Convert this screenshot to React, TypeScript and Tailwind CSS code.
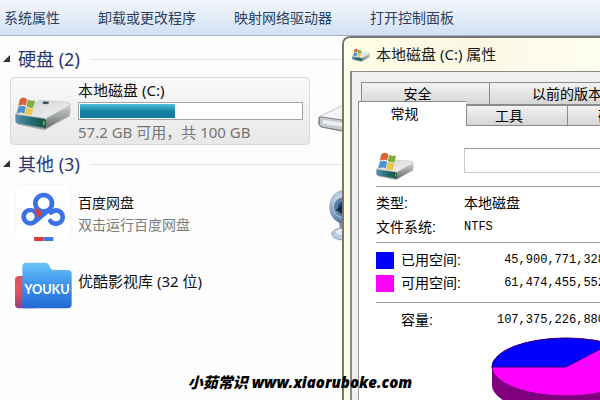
import { useState } from 'react'

const toolbarItems = ['系统属性', '卸载或更改程序', '映射网络驱动器', '打开控制面板']

// The small sizes carry a bigger Windows flag than the 56px tile icon
function DriveIcon({ className, small = false }: { className: string; small?: boolean }) {
  return (
    <svg viewBox={small ? '0 0 168 124' : '0 0 168 105'} className={className} aria-hidden="true">
      <defs>
        <linearGradient id="driveTop" x1="0" y1="0" x2="1" y2="1">
          <stop offset="0" stopColor="#d2d4d4" />
          <stop offset="1" stopColor="#f2f3f3" />
        </linearGradient>
        <linearGradient id="driveSide" x1="0" y1="0" x2="0" y2="1">
          <stop offset="0" stopColor="#d3d5d5" />
          <stop offset="1" stopColor="#666a6a" />
        </linearGradient>
        <linearGradient id="driveFront" x1="0" y1="0" x2="1" y2="0">
          <stop offset="0" stopColor="#5a8fb0" />
          <stop offset="0.5" stopColor="#226e74" />
          <stop offset="1" stopColor="#174f3b" />
        </linearGradient>
      </defs>
      <g transform={small ? 'translate(0 20)' : undefined}>
        <path d="M6 86 L88 104 L164 62 L164 54 L94 88 Z" fill="#a8abab" />
        <path d="M2 58 Q2 53 8 49 L66 19 Q74 14 84 15 L154 20 Q166 21 166 29 L98 67 Q92 71 84 69 Z" fill="url(#driveTop)" stroke="#aeb1b1" strokeWidth="1.5" />
        <path d="M94 69 L166 28 L166 50 Q165 55 158 59 L98 96 Q94 99 90 99 Z" fill="url(#driveSide)" />
        <path d="M2 57 L86 69 Q94 70 94 78 L94 99 L10 85 Q2 83 2 76 Z" fill="url(#driveFront)" stroke="#8e9696" strokeWidth="2" />
        <path d="M84 76 L89 77 L89 90 L84 89 Z" fill="#59c36b" />
        {!small && <ellipse cx="92" cy="22" rx="10" ry="4" fill="#4a4d4d" />}
      </g>
      <g transform={small ? 'translate(2 -6) scale(1.45)' : undefined}>
        <path d="M14 12 Q25 1 36 11 L33 31 Q22 24 10 32 Z" fill="#dc6337" />
        <path d="M38 12 Q48 19 60 14 L55 35 Q45 39 35 32 Z" fill="#7fae3f" />
        <path d="M10 34 Q21 27 32 34 L28 54 Q17 48 5 55 Z" fill="#4c93cc" />
        <path d="M34 35 Q44 42 55 38 L50 58 Q40 61 30 55 Z" fill="#f2c54c" />
      </g>
    </svg>
  )
}

function BackDriveIcon() {
  return (
    <svg viewBox="0 0 168 84" className="h-7 w-14" aria-hidden="true">
      <path d="M3 36 L70 4 L160 10 L160 44 L90 82 L10 66 Q2 64 2 54 Z" fill="#dfe1e3" stroke="#8d9195" strokeWidth="3" />
      <path d="M3 36 L70 4 L160 10 L90 46 Z" fill="#f4f5f6" />
      <path d="M4 38 Q4 34 12 36 L84 47 Q90 48 90 56 L90 80 L12 66 Q4 64 4 56 Z" fill="#c7cace" stroke="#7d8286" strokeWidth="3" />
      <path d="M14 44 L78 54 L78 66 L14 56 Z" fill="#eceef0" />
    </svg>
  )
}

function WebcamIcon() {
  return (
    <svg viewBox="0 0 90 162" className="h-[54px] w-[30px]" aria-hidden="true">
      <defs>
        <radialGradient id="camBody" cx="0.35" cy="0.3" r="0.8">
          <stop offset="0" stopColor="#dbe5f0" />
          <stop offset="0.6" stopColor="#7c9bbd" />
          <stop offset="1" stopColor="#3d5877" />
        </radialGradient>
      </defs>
      <path d="M28 92 L60 92 L56 130 L34 130 Z" fill="#7f95ad" />
      <ellipse cx="42" cy="138" rx="34" ry="18" fill="#b9cbe0" stroke="#6d839c" strokeWidth="2" />
      <ellipse cx="40" cy="132" rx="20" ry="9" fill="#e3ebf4" />
      <ellipse cx="44" cy="56" rx="43" ry="50" fill="url(#camBody)" />
      <circle cx="44" cy="58" r="31" fill="#5b7fa8" stroke="#b5c8dc" strokeWidth="3" />
      <circle cx="46" cy="60" r="20" fill="#23486f" />
      <path d="M20 66 L40 50 L40 74 Z" fill="#0f2741" />
    </svg>
  )
}

function BaiduIcon() {
  return (
    <svg viewBox="0 0 168 174" className="h-[58px] w-14" aria-hidden="true">
      <rect x="1" y="1" width="166" height="172" rx="14" fill="#fff" stroke="#f3f3f3" strokeWidth="2" />
      <g fill="none" stroke="#3b73e6" strokeWidth="14" strokeLinecap="round">
        <circle cx="86" cy="58" r="25" />
        <circle cx="46" cy="98" r="20" />
        <path d="M61 112 L104 76" />
        <path d="M108 86 C122 72 143 82 143 99 C143 118 119 126 106 111" />
      </g>
      <path d="M57 79 L68 73 L83 89 L70 101 Z" fill="#d83d40" />
      <rect x="57" y="159" width="29" height="12" rx="2" fill="#e0393f" />
      <rect x="86" y="159" width="29" height="12" rx="2" fill="#3b7de8" />
    </svg>
  )
}

function YoukuIcon() {
  return (
    <svg viewBox="0 0 171 141" className="h-[47px] w-[57px]" aria-hidden="true">
      <defs>
        <linearGradient id="youkuFolder" x1="0" y1="0" x2="0" y2="1">
          <stop offset="0" stopColor="#6cc4f7" />
          <stop offset="0.45" stopColor="#3f97ee" />
          <stop offset="1" stopColor="#2268d4" />
        </linearGradient>
        <linearGradient id="youkuBack" x1="0" y1="0" x2="0" y2="1">
          <stop offset="0" stopColor="#d9525c" />
          <stop offset="0.5" stopColor="#e2525f" />
          <stop offset="1" stopColor="#8f3f7f" />
        </linearGradient>
      </defs>
      <rect x="0" y="42" width="70" height="97" rx="12" fill="url(#youkuBack)" />
      <path d="M22 14 Q22 2 34 2 L90 2 Q98 2 102 9 L106 18 Q109 24 117 24 L158 24 Q170 24 170 36 L170 127 Q170 139 158 139 L22 139 Z" fill="url(#youkuFolder)" />
      <text x="28" y="97" fontSize="38" fontWeight="700" fontFamily="Lato, sans-serif" fill="#fff">YOUKU</text>
    </svg>
  )
}

function PieChart() {
  return (
    <svg viewBox="0 0 150 80" className="h-20 w-[150px] shrink-0" aria-hidden="true">
      <path d="M1 30 L1 48 A74 29 0 0 0 149 48 L149 30 Z" fill="#800080" />
      <ellipse cx="75" cy="30" rx="74" ry="29" fill="#f0f" stroke="#700070" strokeWidth="1" />
      <path d="M75 30 L1 30 A74 29 0 0 1 119 7 Z" fill="#00f" stroke="#200090" strokeWidth="1" />
    </svg>
  )
}

function SectionHeading({ title }: { title: string }) {
  return (
    <div className="flex h-6 items-center pl-[3px]">
      <svg viewBox="0 0 8 8" className="mr-[7px] size-2" aria-hidden="true">
        <path d="M7 0 L7 7 L0 7 Z" fill="#333" />
      </svg>
      <h2 className="text-lg leading-6 text-[#2b3570]">{title}</h2>
      <div className="ml-2.5 h-px flex-1 bg-[#e2e2e4]" />
    </div>
  )
}

const tabClass = 'shrink-0 border border-[#8c8c8c] bg-linear-to-b from-[#f3f3f3] to-[#d6d6d6] text-sm leading-5'

function PropertiesDialog() {
  const [label, setLabel] = useState('')

  return (
    <section
      role="dialog"
      aria-label="本地磁盘 (C:) 属性"
      className="absolute top-9 right-0 bottom-0 left-[342px] flex flex-col overflow-hidden rounded-tl-lg border-t-2 border-l-2 border-[#77776f] bg-[#fffee9]"
    >
      <header className="flex h-[33px] shrink-0 items-center gap-1.5 bg-linear-to-r from-[#fffee6] via-[#faf8e4] to-[#fffff0] pl-2 text-[#1a1a1a]">
        <DriveIcon small className="h-3.5 w-[18px]" />
        <h1 className="text-[15px]">本地磁盘 (C:) 属性</h1>
      </header>

      <div className="ml-1.5 flex flex-1 flex-col border-t border-l-2 border-[#8a8a86] bg-[#f0f0f0] pt-2.5 pl-1.5 font-['Liberation_Sans','Noto_Sans_CJK_SC',sans-serif] text-black">
        <div role="tablist">
          <div className="ml-[3px] flex h-[23px]">
            <button role="tab" className={`${tabClass} w-[129px] pr-4`}>安全</button>
            <button role="tab" className={`${tabClass} -ml-px w-[156px]`}>以前的版本</button>
          </div>
          <div className="flex h-[21px] items-end">
            <button role="tab" aria-selected="true" className="h-[25px] w-[108px] shrink-0 border-t border-l border-[#8c8c8c] bg-white pr-4 text-sm leading-5">
              常规
            </button>
            <button role="tab" className={`${tabClass} h-[21px] w-[102px] pr-4`}>工具</button>
            <button role="tab" className={`${tabClass} -ml-px h-[21px] w-[90px]`}>硬件</button>
          </div>
        </div>

        <div role="tabpanel" className="flex-1 border-l border-[#9a9a9a] bg-white pl-[17px] text-sm">
          <div className="flex h-[60px] items-start pt-[22px]">
            <DriveIcon small className="mt-1 h-7 w-[38px] shrink-0" />
            <input
              aria-label="卷标"
              value={label}
              onChange={(e) => setLabel(e.target.value)}
              className="ml-[50px] h-[25px] w-[200px] shrink-0 border border-[#c9c9c9] border-t-[#999] px-1"
            />
          </div>

          <dl className="grid h-14 grid-cols-[88px_1fr] content-center border-t border-[#999] leading-6">
            <dt>类型:</dt>
            <dd>本地磁盘</dd>
            <dt>文件系统:</dt>
            <dd className="font-['Liberation_Mono',monospace] text-xs leading-6">NTFS</dd>
          </dl>

          <table className="w-[229px] border-t border-[#999]">
            <tbody>
              <tr className="h-1.5" />
              <tr className="h-[23px]">
                <td className="w-[25px] p-0"><div className="h-[17px] w-[18px] bg-[#00f]" /></td>
                <th scope="row" className="p-0 text-left font-normal">已用空间:</th>
                <td className="p-0 text-right font-['Liberation_Mono',monospace] text-xs">45,900,771,328</td>
              </tr>
              <tr className="h-[23px]">
                <td className="p-0"><div className="h-[17px] w-[18px] bg-[#f0f]" /></td>
                <th scope="row" className="p-0 text-left font-normal">可用空间:</th>
                <td className="p-0 text-right font-['Liberation_Mono',monospace] text-xs">61,474,455,552</td>
              </tr>
              <tr className="h-2" />
              <tr className="h-[34px] border-t border-[#999]">
                <td className="p-0" />
                <th scope="row" className="p-0 text-left font-normal">容量:</th>
                <td className="p-0 text-right font-['Liberation_Mono',monospace] text-xs">107,375,226,880</td>
              </tr>
            </tbody>
          </table>

          <div className="flex pl-[115px]">
            <PieChart />
          </div>
        </div>
      </div>
    </section>
  )
}

export default function App() {
  return (
    <div className="relative min-h-screen overflow-hidden bg-[#fdfdfd] font-['Noto_Sans','Noto_Sans_CJK_SC',sans-serif]">
      <nav className="flex h-9 items-center gap-[38px] border-b border-[#a3b2c9] bg-linear-to-b from-[#f3f7fd] via-[#e3ecf8] to-[#d3e0f2] pl-1 text-sm whitespace-nowrap text-[#2b3f63]">
        {toolbarItems.map((item) => (
          <button key={item}>{item}</button>
        ))}
      </nav>

      <main className="overflow-hidden pt-[11px]">
        <SectionHeading title="硬盘 (2)" />
        <div className="mt-1.5 ml-2.5 grid grid-cols-[300px_300px] gap-x-2">
          <div className="flex h-[68px] items-center rounded border border-[#d9d9d9] bg-linear-to-b from-[#fafafa] to-[#e8e8e8] pr-1.5 pl-1">
            <DriveIcon className="mt-1 h-9 w-14 shrink-0" />
            <div className="ml-[7px] flex-1 text-[15px] leading-5">
              <p className="text-[#111]">本地磁盘 (C:)</p>
              <div className="my-0.5 h-[18px] border border-[#a5a5a5] bg-white p-px">
                <div className="h-full bg-linear-to-b from-[#4fc3dd] via-[#1483a3] to-[#0f7896]" style={{ width: '43%' }} />
              </div>
              <p className="text-[#757575]">57.2 GB 可用，共 100 GB</p>
            </div>
          </div>
          <div className="flex items-center pt-4">
            <BackDriveIcon />
          </div>
        </div>

        <div className="mt-[7px]">
          <SectionHeading title="其他 (3)" />
        </div>
        <div className="mt-2 ml-[15px] grid grid-cols-[300px_300px] gap-x-3.5 gap-y-4 text-sm leading-[22px]">
          <div className="flex gap-[7px]">
            <BaiduIcon />
            <div className="pt-2">
              <p className="text-[#111]">百度网盘</p>
              <p className="text-[#7c7c7c]">双击运行百度网盘</p>
            </div>
          </div>
          <div className="pt-1">
            <WebcamIcon />
          </div>
          <div className="flex items-start gap-1.5 pt-1">
            <YoukuIcon />
            <p className="pt-2 text-[15px] text-[#111]">优酷影视库 (32 位)</p>
          </div>
        </div>
      </main>

      <PropertiesDialog />

      <p className="absolute inset-x-0 bottom-2 text-center font-['Open_Sans','Noto_Sans_CJK_SC',sans-serif] text-[15px] leading-5 font-extrabold text-black italic">
        小茹常识 www.xiaoruboke.com
      </p>
    </div>
  )
}
